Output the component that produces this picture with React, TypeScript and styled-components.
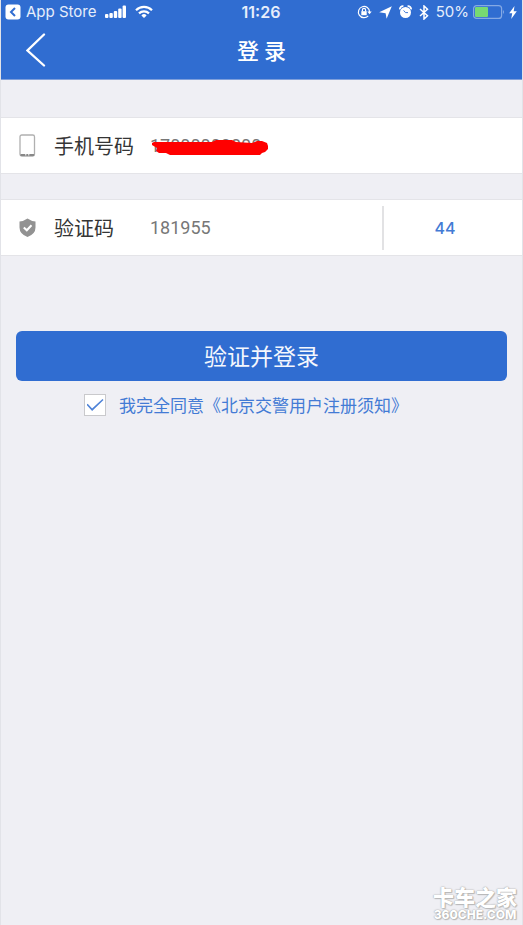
import React, { useState } from "react";
import styled, { createGlobalStyle } from "styled-components";

const blue = "#306dd1";
const softBlue = "#437bd5";
const cjk = `"Noto Sans CJK SC", sans-serif`;

const GlobalStyle = createGlobalStyle`
  *, *::before, *::after { box-sizing: border-box; }
  body { margin: 0; background: #efeff4; font-family: Inter, ${cjk}; }
  button, input { font: inherit; }
`;

const Page = styled.div`
  min-height: 100vh;
  display: flex;
  flex-direction: column;
  background: #efeff4;
  border-left: 1px solid #e2e3e8;
  border-right: 1px solid #e2e3e8;
`;

const Header = styled.header`
  background: ${blue};
  color: #fff;
  border-bottom: 1px solid #7f9fdb;
`;

const StatusBar = styled.div`
  display: grid;
  grid-template-columns: 1fr auto 1fr;
  align-items: center;
  height: 24px;
  padding: 0 5px 0 4px;
  font-size: 15px;
  line-height: 24px;
  color: #e6eefb;
`;

const StatusGroup = styled.div<{ $end?: boolean }>`
  display: flex;
  align-items: center;
  justify-content: ${(p) => (p.$end ? "flex-end" : "flex-start")};
  gap: ${(p) => (p.$end ? "4px" : "9px")};
  white-space: nowrap;
`;

const ReturnLink = styled.a`
  display: flex;
  align-items: center;
  gap: 5px;
  color: inherit;
  text-decoration: none;
`;

const Time = styled.time`
  font-weight: 600;
  font-size: 16px;
`;

const Indicators = styled.div`
  display: flex;
  align-items: center;
  gap: 7px;
  margin-right: 3px;
`;

const NavBar = styled.div`
  display: grid;
  grid-template-columns: 70px 1fr 70px;
  align-items: start;
  height: 55px;
`;

const BackButton = styled.button`
  display: flex;
  align-items: center;
  justify-content: center;
  height: 52px;
  padding: 0;
  border: 0;
  background: none;
  color: #fff;
`;

const Title = styled.h1`
  margin: 0;
  text-align: center;
  font: 500 22px/50px ${cjk};
`;

const Form = styled.form`
  display: flex;
  flex-direction: column;
`;

const Row = styled.div`
  display: flex;
  align-items: center;
  height: 57px;
  margin-bottom: 25px;
  padding-left: 15px;
  background: #fff;
  border-top: 1px solid #e4e4e8;
  border-bottom: 1px solid #e4e4e8;

  &:first-child { margin-top: 37px; }
`;

const FieldLabel = styled.label`
  display: flex;
  align-items: center;
  gap: 15px;
  width: 134px;
  flex: none;
  color: #353535;
  font: 400 20px/30px ${cjk};
`;

const FieldValue = styled.div`
  position: relative;
  flex: 1;
  min-width: 0;
  display: flex;
`;

const Field = styled.input`
  width: 100%;
  height: 40px;
  padding: 0;
  border: 0;
  outline: 0;
  background: none;
  color: #777;
  font: 400 18px/40px Roboto, sans-serif;
`;

const Redaction = styled.svg`
  position: absolute;
  left: 2px;
  top: 14px;
`;

const CodeTimer = styled.button`
  width: 140px;
  height: 44px;
  flex: none;
  padding: 0 16px 0 0;
  border: 0;
  border-left: 2px solid #e2e2e4;
  background: none;
  color: ${softBlue};
  font-size: 16px;
  font-weight: 500;
`;

const Submit = styled.button`
  height: 50px;
  margin: 50px 15px 0;
  padding: 0 0 2px;
  border: 0;
  border-radius: 6px;
  background: ${blue};
  color: #f4f7fd;
  font: 400 23px/46px ${cjk};
`;

const Agreement = styled.label`
  display: flex;
  align-items: center;
  gap: 13px;
  margin: 12px 0 0 83px;
  color: ${softBlue};
  font: 400 17px/24px ${cjk};
`;

const Check = styled.input`
  appearance: none;
  width: 22px;
  height: 22px;
  margin: 0;
  border: 1px solid #c9c9cc;
  background: #fff;
  display: grid;
  place-items: center;

  &:checked::before {
    content: "";
    width: 17px;
    height: 12px;
    background: #4f83d8;
    clip-path: polygon(0 48%, 7% 40%, 33% 80%, 94% 0, 100% 8%, 33% 100%);
  }
`;

const AgreementLink = styled.a`
  color: inherit;
  text-decoration: none;
  white-space: nowrap;
`;

const Watermark = styled.footer`
  display: flex;
  flex-direction: column;
  align-items: center;
  margin: auto 5px 4px 0;
  align-self: flex-end;
  color: #fff;
  text-shadow: 0 0 1px #999, 1px 1px 1px #bbb, 0 0 2px #bbb;
`;

const Brand = styled.div`
  font: 900 21px/25px ${cjk};
`;

const Domain = styled.div`
  font: 800 12px/12px Inter, sans-serif;
`;

const ReturnIcon = () => (
  <svg width="16" height="16" viewBox="0 0 16 16" aria-hidden="true">
    <rect x="0.5" y="0.5" width="15" height="15" rx="3" fill="#fff" />
    <path d="M10 4 6 8l4 4" fill="none" stroke={blue} strokeWidth="2" />
  </svg>
);

const SignalIcon = () => (
  <svg width="21" height="14" viewBox="0 0 21 14" fill="#fff" aria-hidden="true">
    <rect x="0" y="9" width="3.4" height="4" rx="1" />
    <rect x="4.4" y="8" width="3.4" height="5" rx="1" />
    <rect x="8.8" y="6" width="3.4" height="7" rx="1" />
    <rect x="13.2" y="3.5" width="3.4" height="9.5" rx="1" />
    <rect x="17.6" y="0.5" width="3.4" height="12.5" rx="1" />
  </svg>
);

const WifiIcon = () => (
  <svg width="18" height="14" viewBox="0 0 18 14" fill="none" stroke="#fff" strokeWidth="2.2" aria-hidden="true">
    <path d="M1 5.2a11.5 11.5 0 0 1 16 0" />
    <path d="M4 8.4a7.2 7.2 0 0 1 10 0" />
    <path d="M9 13 6.4 10.4a3.7 3.7 0 0 1 5.2 0Z" fill="#fff" stroke="none" />
  </svg>
);

const RotationLockIcon = () => (
  <svg width="15" height="14" viewBox="0 0 15 14" fill="none" stroke="#fff" aria-hidden="true">
    <path d="M11.2 10.8A5.6 5.6 0 1 1 12.6 7" strokeWidth="1.2" />
    <path d="M10.3 6.5h4.4l-2.2 2.8Z" fill="#fff" stroke="none" />
    <rect x="4.3" y="6.2" width="5.4" height="4" fill="#fff" stroke="none" />
    <path d="M5.4 6.5V5a1.6 1.6 0 0 1 3.2 0v1.5" strokeWidth="1.2" />
  </svg>
);

const LocationIcon = () => (
  <svg width="13" height="13" viewBox="0 0 13 13" fill="#fff" aria-hidden="true">
    <path d="M12.8.2 7.6 12.8 6.6 7.2.2 6.2Z" />
  </svg>
);

const AlarmIcon = () => (
  <svg width="13" height="14" viewBox="0 0 13 14" aria-hidden="true">
    <path d="M.9 4.4A3 3 0 0 1 4.4 1.2M12.1 4.4A3 3 0 0 0 8.6 1.2" fill="none" stroke="#fff" strokeWidth="1.8" />
    <circle cx="6.5" cy="7.5" r="5.5" fill="#fff" />
    <path d="M9 7.6H6.5L4.6 5.4" fill="none" stroke={blue} strokeWidth="0.9" />
  </svg>
);

const BluetoothIcon = () => (
  <svg width="10" height="15" viewBox="0 0 10 15" fill="none" stroke="#fff" strokeWidth="1.5" aria-hidden="true">
    <path d="m1 4 7.5 6.7L5 14V1l3.5 3.3L1 11" />
  </svg>
);

const BatteryIcon = () => (
  <svg width="32" height="14" viewBox="0 0 32 14" aria-hidden="true">
    <rect x=".6" y=".6" width="28" height="12.8" rx="3" fill="none" stroke="#85a9e4" strokeWidth="1.2" />
    <rect x="2" y="2" width="13" height="10" rx="1" fill="#77da72" />
    <path d="M30 5q2 2 0 4Z" fill="#85a9e4" />
  </svg>
);

const BoltIcon = () => (
  <svg width="8" height="13" viewBox="0 0 8 13" fill="#fff" aria-hidden="true">
    <path d="M5.5 0 .2 7.2h3L2.2 13 7.8 5.2H4.7Z" />
  </svg>
);

const BackIcon = () => (
  <svg width="20" height="34" viewBox="0 0 20 34" fill="none" stroke="#fff" strokeWidth="2.3" strokeLinecap="round" aria-hidden="true">
    <path d="M18 1.5 1.5 17.5 18 32.5" />
  </svg>
);

const PhoneIcon = () => (
  <svg width="23" height="24" viewBox="0 0 23 24" fill="none" aria-hidden="true">
    <rect x="4" y="1" width="14.5" height="21" rx="1.8" stroke="#b0b0b0" strokeWidth="1.3" />
    <path d="M4.5 21h4.8m1 0h2m1 0h4.8" stroke="#888" strokeWidth="2" />
  </svg>
);

const ShieldIcon = () => (
  <svg width="23" height="24" viewBox="0 0 23 24" aria-hidden="true">
    <path d="M11.5 2.5q4 2.8 8 3v6q0 6.5-8 9.5-8-3-8-9.5v-6q4-.2 8-3Z" fill="#929292" />
    <path d="m7.8 11.5 3 2.8 4.7-5" fill="none" stroke="#fff" strokeWidth="2" />
  </svg>
);

export default function App() {
  const [phone, setPhone] = useState("17000000000");
  const [code, setCode] = useState("181955");
  const [agreed, setAgreed] = useState(true);

  return (
    <Page>
      <GlobalStyle />
      <Header>
        <StatusBar>
          <StatusGroup>
            <ReturnLink href="#"><ReturnIcon />App Store</ReturnLink>
            <SignalIcon />
            <WifiIcon />
          </StatusGroup>
          <Time>11:26</Time>
          <StatusGroup $end>
            <Indicators>
              <RotationLockIcon />
              <LocationIcon />
              <AlarmIcon />
              <BluetoothIcon />
            </Indicators>
            <span>50%</span>
            <BatteryIcon />
            <BoltIcon />
          </StatusGroup>
        </StatusBar>
        <NavBar>
          <BackButton type="button" aria-label="返回"><BackIcon /></BackButton>
          <Title>登 录</Title>
        </NavBar>
      </Header>

      <Form onSubmit={(e) => e.preventDefault()}>
        <Row>
          <FieldLabel htmlFor="phone"><PhoneIcon />手机号码</FieldLabel>
          <FieldValue>
            <Field id="phone" type="tel" value={phone} onChange={(e) => setPhone(e.target.value)} />
            <Redaction width="117" height="16" viewBox="0 0 117 16" aria-hidden="true">
              <path d="M2 2H60L64 0H80L84 2 100 3 105 1H110L115 3 116 6V9L113 12 110 13 108 15H18L14 13H7L4 11 5 8 0 5V3Z" fill="#f00" />
            </Redaction>
          </FieldValue>
        </Row>
        <Row>
          <FieldLabel htmlFor="code"><ShieldIcon />验证码</FieldLabel>
          <FieldValue>
            <Field id="code" inputMode="numeric" value={code} onChange={(e) => setCode(e.target.value)} />
          </FieldValue>
          <CodeTimer type="button">44</CodeTimer>
        </Row>
        <Submit type="submit">验证并登录</Submit>
        <Agreement>
          <Check type="checkbox" checked={agreed} onChange={(e) => setAgreed(e.target.checked)} />
          <AgreementLink href="#">我完全同意《北京交警用户注册须知》</AgreementLink>
        </Agreement>
      </Form>

      <Watermark>
        <Brand>卡车之家</Brand>
        <Domain>360CHE.COM</Domain>
      </Watermark>
    </Page>
  );
}
